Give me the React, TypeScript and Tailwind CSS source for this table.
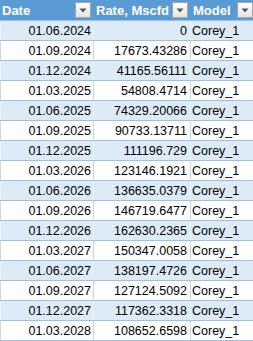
const rows: [string, string][] = [
  ["01.06.2024", "0"],
  ["01.09.2024", "17673.43286"],
  ["01.12.2024", "41165.56111"],
  ["01.03.2025", "54808.4714"],
  ["01.06.2025", "74329.20066"],
  ["01.09.2025", "90733.13711"],
  ["01.12.2025", "111196.729"],
  ["01.03.2026", "123146.1921"],
  ["01.06.2026", "136635.0379"],
  ["01.09.2026", "146719.6477"],
  ["01.12.2026", "162630.2365"],
  ["01.03.2027", "150347.0058"],
  ["01.06.2027", "138197.4726"],
  ["01.09.2027", "127124.5092"],
  ["01.12.2027", "117362.3318"],
  ["01.03.2028", "108652.6598"],
];

function FilterButton() {
  return (
    <div className="w-4 h-4 shrink-0 border border-[#a6a6a6] bg-gradient-to-b from-[#ffffff] to-[#e4e4e4] flex items-center justify-center">
      <svg width="8" height="5" viewBox="0 0 8 5">
        <path d="M0.5 0.5 L7.5 0.5 L4 4.5 Z" fill="#555555" />
      </svg>
    </div>
  );
}

function HeaderCell({ label, width }: { label: string; width: string }) {
  return (
    <div className={`${width} h-5 flex items-center justify-between pl-[2px] pr-[2px] border-r border-[#5b9bd5]`}>
      <span className="text-white font-bold text-[13px] leading-none">{label}</span>
      <FilterButton />
    </div>
  );
}

export default function App() {
  return (
    <div
      className="w-[253px] h-[341px] overflow-hidden bg-white text-black"
      style={{ fontFamily: '"Liberation Sans", Arial, sans-serif' }}
    >
      <div className="flex bg-[#5b9bd5] w-[256px]">
        <HeaderCell label="Date" width="w-[94px]" />
        <HeaderCell label="Rate, Mscfd" width="w-[97px]" />
        <HeaderCell label="Model" width="w-[65px]" />
      </div>
      {rows.map(([date, rate], i) => {
        const band = i % 2 === 0;
        const grid = band ? "border-[#eaf2fa]" : "border-[#d4d4d4]";
        return (
          <div
            key={date}
            className={`flex w-[256px] h-5 border-t border-[#9bc2e6] ${
              i === rows.length - 1 ? "border-b h-[21px]" : ""
            } ${band ? "bg-[#ddebf7]" : "bg-white"}`}
          >
            <div className={`w-[94px] h-[19px] border-l border-r ${grid} flex items-center justify-end pr-[2px] text-[12.5px] leading-none pt-[1px]`}>
              {date}
            </div>
            <div className={`w-[97px] h-[19px] border-r ${grid} flex items-center justify-end pr-[3px] text-[12.5px] leading-none pt-[1px]`}>
              {rate}
            </div>
            <div className={`w-[65px] h-[19px] border-r ${grid} flex items-center pl-[1px] text-[12.5px] leading-none pt-[1px]`}>
              Corey_1
            </div>
          </div>
        );
      })}
    </div>
  );
}
